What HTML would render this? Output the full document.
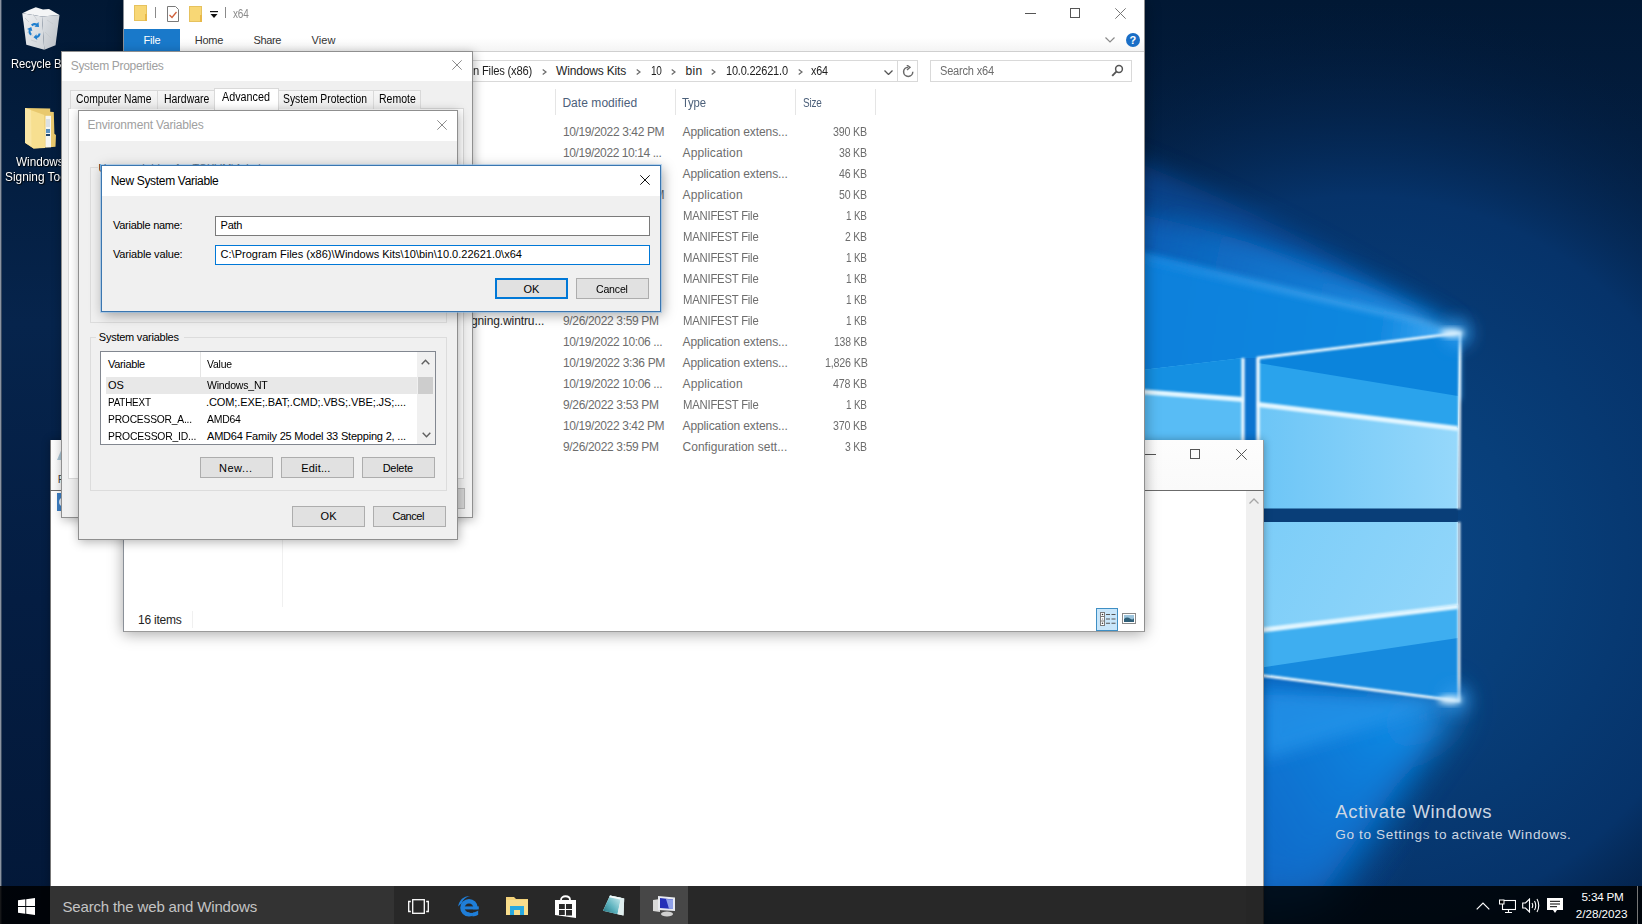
<!DOCTYPE html>
<html><head><meta charset="utf-8">
<style>
*{box-sizing:border-box;margin:0;padding:0}
html,body{width:1642px;height:924px;overflow:hidden;background:#021028}
body{position:relative;font-family:"Liberation Sans",sans-serif;font-size:12px;color:#000}
.a{position:absolute}
.t{position:absolute;white-space:nowrap;line-height:14px}
#wall{position:absolute;left:0;top:0;width:1642px;height:924px}
</style></head><body>

<!-- WALLPAPER -->
<svg id="wall" width="1642" height="924" viewBox="0 0 1642 924">
  <defs>
    <linearGradient id="bgL" x1="0" y1="0" x2="0" y2="924" gradientUnits="userSpaceOnUse">
      <stop offset="0" stop-color="#011834"/>
      <stop offset="0.35" stop-color="#06244c"/>
      <stop offset="0.65" stop-color="#041d42"/>
      <stop offset="1" stop-color="#031838"/>
    </linearGradient>
    <radialGradient id="glow" cx="1360" cy="560" r="560" gradientUnits="userSpaceOnUse">
      <stop offset="0" stop-color="#0a4686"/>
      <stop offset="0.3" stop-color="#083f7a"/>
      <stop offset="0.65" stop-color="#06336a"/>
      <stop offset="1" stop-color="#021a3a" stop-opacity="0"/>
    </radialGradient>
    <radialGradient id="glowB" cx="1200" cy="770" r="230" gradientUnits="userSpaceOnUse">
      <stop offset="0" stop-color="#0c72d2"/>
      <stop offset="0.55" stop-color="#0a62b8" stop-opacity="0.75"/>
      <stop offset="1" stop-color="#0a4f95" stop-opacity="0"/>
    </radialGradient>
    <linearGradient id="beam" x1="1144" y1="290" x2="1460" y2="332" gradientUnits="userSpaceOnUse">
      <stop offset="0" stop-color="#0b80dc"/>
      <stop offset="0.75" stop-color="#1088e0"/>
      <stop offset="1" stop-color="#4cb0f8"/>
    </linearGradient>
    <linearGradient id="soft" x1="1144" y1="200" x2="1460" y2="332" gradientUnits="userSpaceOnUse">
      <stop offset="0" stop-color="#0850a4"/>
      <stop offset="0.7" stop-color="#0a5cb4"/>
      <stop offset="1" stop-color="#0c70cc"/>
    </linearGradient>
    <linearGradient id="soft2" x1="1144" y1="200" x2="1460" y2="332" gradientUnits="userSpaceOnUse">
      <stop offset="0" stop-color="#0a62bc"/>
      <stop offset="1" stop-color="#1280dc"/>
    </linearGradient>
    <linearGradient id="tipg" x1="1150" y1="270" x2="1462" y2="333" gradientUnits="userSpaceOnUse">
      <stop offset="0" stop-color="#1a84dc" stop-opacity="0"/>
      <stop offset="0.5" stop-color="#1a88e0" stop-opacity="0.45"/>
      <stop offset="1" stop-color="#3aa8f4" stop-opacity="0.95"/>
    </linearGradient>
    <linearGradient id="streak" x1="1144" y1="251" x2="1460" y2="332" gradientUnits="userSpaceOnUse">
      <stop offset="0" stop-color="#1a88e0" stop-opacity="0.5"/>
      <stop offset="0.8" stop-color="#70c4ff"/>
      <stop offset="1" stop-color="#e8f8ff"/>
    </linearGradient>
    <linearGradient id="p3" x1="1258" y1="0" x2="1458" y2="0" gradientUnits="userSpaceOnUse">
      <stop offset="0" stop-color="#6cc5f6"/>
      <stop offset="1" stop-color="#96d8fb"/>
    </linearGradient>
    <linearGradient id="p4" x1="1258" y1="522" x2="1458" y2="620" gradientUnits="userSpaceOnUse">
      <stop offset="0" stop-color="#7ccdf8"/>
      <stop offset="1" stop-color="#92d6fa"/>
    </linearGradient>
    <linearGradient id="cone" x1="1458" y1="700" x2="1200" y2="860" gradientUnits="userSpaceOnUse">
      <stop offset="0" stop-color="#3aa8f4"/>
      <stop offset="0.25" stop-color="#0f86e2"/>
      <stop offset="1" stop-color="#0a66c6" stop-opacity="0.6"/>
    </linearGradient>
    <filter id="blur8" x="-50%" y="-50%" width="200%" height="200%"><feGaussianBlur stdDeviation="8"/></filter>
    <filter id="blur20" x="-50%" y="-50%" width="200%" height="200%"><feGaussianBlur stdDeviation="20"/></filter>
    <filter id="blur12" x="-50%" y="-50%" width="200%" height="200%"><feGaussianBlur stdDeviation="12"/></filter>
    <filter id="blur1" x="-50%" y="-50%" width="200%" height="200%"><feGaussianBlur stdDeviation="0.9"/></filter>
    <filter id="blur3" x="-50%" y="-50%" width="200%" height="200%"><feGaussianBlur stdDeviation="3"/></filter>
  </defs>
  <rect width="1642" height="924" fill="url(#bgL)"/>
  <rect width="1642" height="924" fill="url(#glow)"/>
  <rect width="1642" height="924" fill="url(#glowB)"/>
  <!-- soft glow above beam -->
  <path d="M1462 333 C1400 292 1290 225 1144 165 L1080 140 L1080 300 Z" fill="url(#soft)" filter="url(#blur12)" opacity="0.65"/>
  <path d="M1462 333 C1390 292 1280 245 1144 215 L1080 200 L1080 290 Z" fill="url(#soft2)" filter="url(#blur12)" opacity="0.85"/>
  
  <path d="M1462 333 L1150 200 L1150 320 Z" fill="url(#tipg)" filter="url(#blur8)"/>
  <!-- bright wedge -->
  <path d="M1460 332 L1100 242 L1100 400 L1460 400 Z" fill="url(#beam)" filter="url(#blur3)"/>
  <!-- streak -->
  <path d="M1462 331 L1100 241 L1100 254 Z" fill="url(#streak)" filter="url(#blur3)" opacity="0.8"/>
  <!-- lower glow wedge -->
  <path d="M1458 700 L1090 640 L1090 900 L1320 900 Z" fill="#0b6ccc" filter="url(#blur20)" opacity="0.75"/>
  <path d="M1458 700 L1100 690 L1100 890 L1320 890 Z" fill="url(#cone)" filter="url(#blur20)"/>
  <path d="M1458 701 L1263 690 L1263 760 Z" fill="#2a9cf0" filter="url(#blur8)" opacity="0.6"/>
  <!-- right panes -->
  <path d="M1258 358 L1460 333 L1458 509 L1258 509 Z" fill="url(#p3)"/>
  <path d="M1258 358 L1460 333 L1458 428 L1258 404 Z" fill="#2aa3ec"/>
  <path d="M1258 358 L1460 333 L1458 396 L1258 363 Z" fill="#0b84dc"/>
  <path d="M1258 522 L1458 522 L1458 700 L1258 675 Z" fill="url(#p4)"/>
  <path d="M1258 630 L1458 605 L1458 700 L1258 675 Z" fill="#3eaef0"/>
  <path d="M1258 668 L1458 638 L1458 700 L1258 675 Z" fill="#168ade"/>
  <rect x="1243" y="508.5" width="215" height="13.5" fill="#093e78"/>
  <rect x="1243" y="358" width="15" height="320" fill="#0b74d0"/>
  <!-- left panes -->
  <path d="M1100 375 L1243 358 L1243 508 L1100 508 Z" fill="#58bcf5"/>
  <path d="M1100 375 L1243 358 L1243 399 L1100 387 Z" fill="#1590e2"/>
  <path d="M1100 522 L1243 522 L1243 672 L1100 660 Z" fill="#72caf7"/>
  <!-- bright bands -->
  <path d="M1258 402 L1458 426 L1458 431 L1258 407 Z" fill="#e2f6ff" filter="url(#blur1)"/>
  <path d="M1100 386 L1243 397 L1243 402 L1100 391 Z" fill="#e2f6ff" filter="url(#blur1)"/>
  <path d="M1258 628 L1458 604 L1458 609 L1258 633 Z" fill="#e2f6ff" filter="url(#blur1)"/>
  <!-- edge glow -->
  <g stroke="#1a78d0" stroke-width="18" fill="none" filter="url(#blur8)" opacity="0.45">
    <path d="M1459 340 L1459 695"/>
  </g>
  <g stroke="#4aaaf0" stroke-width="7" fill="none" filter="url(#blur3)" opacity="0.55">
    <path d="M1459 333 L1459 508 M1459 522 L1459 701"/>
  </g>
  <!-- edges -->
  <g stroke="#f2fbff" stroke-width="2.6" fill="none" filter="url(#blur1)">
    <path d="M1258 509 L1258 358 L1460 333 L1459 509"/>
    <path d="M1258 522 L1258 675 L1459 701 L1459 522"/>
    <path d="M1243 508 L1243 358" stroke-width="3.2"/>
    <path d="M1243 522 L1243 672" stroke-width="3.2"/>
    <path d="M1258 509 L1258 358" stroke-width="3.2"/>
  </g>
  <circle cx="1458" cy="333" r="14" fill="#3aa0f0" filter="url(#blur8)" opacity="0.7"/>
  <ellipse cx="1452" cy="333" rx="12" ry="4" fill="#e8f8ff" filter="url(#blur3)"/>
  <circle cx="1456" cy="700" r="14" fill="#3aa0f0" filter="url(#blur8)" opacity="0.6"/>
  <ellipse cx="1450" cy="700" rx="12" ry="4" fill="#e8f8ff" filter="url(#blur3)"/>
</svg>

<div class="t" style="left:1335.30px;top:803.09px;font-size:18.5px;line-height:18.5px;color:#cdd7e3;letter-spacing:0.684px">Activate Windows</div>
<div class="t" style="left:1335.30px;top:827.79px;font-size:13.6px;line-height:13.6px;color:#cdd7e3;letter-spacing:0.618px">Go to Settings to activate Windows.</div>
<div class="a" style="left:0;top:0;width:1px;height:924px;background:#8a93a0"></div><div class="a" style="left:1px;top:0;width:1px;height:924px;background:#3a4a60"></div>
<svg class="a" style="left:15px;top:2px" width="52" height="52" viewBox="0 0 52 52">
  <defs><linearGradient id="rbf" x1="0" y1="0" x2="1" y2="1"><stop offset="0" stop-color="#eef0f2"/><stop offset="1" stop-color="#cfd3d8"/></linearGradient>
  <linearGradient id="rbr" x1="0" y1="0" x2="1" y2="1"><stop offset="0" stop-color="#dfe2e6"/><stop offset="1" stop-color="#b9bec4"/></linearGradient></defs>
  <path d="M7.3 11.3 L27 14.5 L29.3 47.8 L11.3 42.8 Z" fill="url(#rbf)"/>
  <path d="M27 14.5 L44.5 12.9 L40.5 43.3 L29.3 47.8 Z" fill="url(#rbr)"/>
  <path d="M7.3 11.3 L14 8 L20.8 5.3 L28 7.5 L34 7 L44.5 12.9 L27 14.5 Z" fill="#f4f5f6"/>
  <path d="M10 16 L14 20 M18 12 L22 18 M32 18 L38 22 M12 30 L18 34 M30 30 L36 36 M16 38 L22 40" stroke="#c4c8cc" stroke-width="1" opacity="0.7"/>
  <g fill="#1f7fcf">
    <path d="M16 22.5 C17.5 21 20 20.5 22 21.5 L23.5 20 L24 25 L19.5 24.8 L20.8 23.5 C19.5 23 18.2 23.4 17.4 24.3 Z"/>
    <path d="M25.5 31.5 C25.5 33.8 24 35.5 22 36 L22.3 38 L18.5 35.2 L21.5 32.3 L21.7 34 C22.8 33.6 23.5 32.6 23.5 31.5 Z"/>
    <path d="M15.8 33.5 C13.8 32.2 13 29.8 13.8 27.7 L12 27 L16.3 25 L17.3 29 L15.7 28.5 C15.3 29.8 15.8 31 16.8 31.8 Z"/>
  </g>
</svg>
<svg class="a" style="left:15px;top:100px" width="52" height="52" viewBox="0 0 52 52">
  <path d="M10 8 L35.2 8.4 L35.2 11.8 L38.8 12 L39.4 33.8 L41 35 L40.5 46.7 L18.6 48.4 L10 42.8 Z" fill="#e9c96e"/>
  <path d="M30.5 15.8 L36 15.8 L36 47.3 L30.5 47.3 Z" fill="#f6f6f2"/>
  <path d="M31 20 H35 M31 22 H35 M31 24 H35 M31 26 H35" stroke="#9ab0c4" stroke-width="0.6"/>
  <rect x="31" y="29" width="4" height="4" fill="#5a90c0"/><rect x="31" y="34" width="4" height="2" fill="#24486c"/>
  <path d="M10 8 L29.3 15 L30 48 L18.6 48.4 L10 42.8 Z" fill="#f7df90"/>
  <path d="M10 8 L16 10 L16.5 46 L10 42.8 Z" fill="#f9e6a6"/>
</svg>
<div class="t" style="left:10.78px;top:57.67px;font-size:12.2px;line-height:12.2px;color:#fff;transform:scaleX(0.9222);transform-origin:0 0;text-shadow:1px 1px 1px rgba(0,0,0,0.9),0 0 2px rgba(0,0,0,0.6)">Recycle Bin</div>
<div class="t" style="left:16.20px;top:156.37px;font-size:12.2px;line-height:12.2px;color:#fff;transform:scaleX(0.9646);transform-origin:0 0;text-shadow:1px 1px 1px rgba(0,0,0,0.9),0 0 2px rgba(0,0,0,0.6)">Windows</div>
<div class="t" style="left:4.80px;top:171.47px;font-size:12.2px;line-height:12.2px;color:#fff;transform:scaleX(0.9724);transform-origin:0 0;text-shadow:1px 1px 1px rgba(0,0,0,0.9),0 0 2px rgba(0,0,0,0.6)">Signing Tools</div>
<div class="a" style="left:50px;top:440px;width:1214px;height:484px;background:#fff;border-left:1px solid #777;border-right:1px solid #9a9a9a;box-shadow:0 0 8px rgba(0,0,0,0.3)"></div>
<div class="a" style="left:51px;top:440px;width:1212px;height:50px;background:linear-gradient(#fdfdfd,#fafafa)"></div>
<div class="a" style="left:50px;top:490px;width:1214px;height:1px;background:#6b6b6b"></div>
<div class="a" style="left:57px;top:493px;width:10px;height:18px;background:#3d7fc4"></div>
<div class="a" style="left:59px;top:497px;width:10px;height:10px;border-radius:50%;border:2px solid #e8f0fa"></div>
<svg class="a" style="left:57px;top:446px" width="8" height="14" viewBox="0 0 8 14"><path d="M6 0 L0 14 L8 14 Z" fill="#a9c4d4"/></svg>
<div class="a" style="left:1145px;top:454px;width:11px;height:1px;background:#555"></div>
<div class="a" style="left:1190px;top:449px;width:10px;height:10px;border:1px solid #555"></div>
<svg class="a" style="left:1236px;top:449px" width="11" height="11" viewBox="0 0 11 11"><path d="M0.3 0.3 L10.7 10.7 M10.7 0.3 L0.3 10.7" stroke="#555" stroke-width="1"/></svg>
<div class="a" style="left:1246px;top:491px;width:17px;height:433px;background:#f0f0f0"></div>
<svg class="a" style="left:1249px;top:498px" width="10" height="6" viewBox="0 0 10 6"><path d="M0.5 5.5 L5 1 L9.5 5.5" fill="none" stroke="#a6a6a6" stroke-width="1.3"/></svg>
<div class="t" style="left:57.80px;top:474.19px;font-size:11px;line-height:11px;color:#444">File</div>
<div class="a" style="left:123px;top:0;width:1022px;height:632px;background:#fff;border-left:1px solid #8a9098;border-right:1px solid #8f8f8f;border-bottom:1px solid #9a9a9a;box-shadow:0 2px 14px rgba(0,0,0,0.35)"></div>
<div class="a" style="left:134px;top:5px;width:13px;height:16px;background:#f8d775;border:1px solid #e6c25e"></div>
<div class="a" style="left:145px;top:14px;width:2px;height:7px;background:#e8b848"></div>
<div class="a" style="left:155px;top:7px;width:1px;height:11px;background:#8a8a8a"></div>
<svg class="a" style="left:167px;top:6px" width="12" height="16" viewBox="0 0 12 16"><path d="M0.5 0.5 H8.5 L11.5 3.5 V15.5 H0.5 Z" fill="#fff" stroke="#7a7a7a"/><path d="M2.5 9 L5 11.5 L9.5 6" fill="none" stroke="#d0603a" stroke-width="1.3"/></svg>
<div class="a" style="left:189px;top:6px;width:13px;height:16px;background:#f8d775;border:1px solid #e6c25e"></div>
<div class="a" style="left:200px;top:15px;width:2px;height:7px;background:#e8b848"></div>
<svg class="a" style="left:210px;top:11px" width="8" height="8" viewBox="0 0 8 8"><rect x="0" y="0" width="8" height="1.2" fill="#111"/><path d="M0.5 3 H7.5 L4 7 Z" fill="#111"/></svg>
<div class="a" style="left:225px;top:7px;width:1px;height:11px;background:#8a8a8a"></div>
<div class="a" style="left:1025px;top:13px;width:11px;height:1px;background:#555"></div>
<div class="a" style="left:1070px;top:8px;width:10px;height:10px;border:1px solid #555"></div>
<svg class="a" style="left:1115px;top:8px" width="11" height="11" viewBox="0 0 11 11"><path d="M0.3 0.3 L10.7 10.7 M10.7 0.3 L0.3 10.7" stroke="#777" stroke-width="1"/></svg>
<div class="a" style="left:124px;top:29px;width:1020px;height:22px;background:linear-gradient(#fff 40%,#f4f4f4)"></div>
<div class="a" style="left:124px;top:29px;width:56px;height:22px;background:#1979ca"></div>
<div class="a" style="left:124px;top:51px;width:1020px;height:1px;background:#cfcfcf"></div>
<svg class="a" style="left:1105px;top:37px" width="10" height="6" viewBox="0 0 10 6"><path d="M0.5 0.5 L5 5 L9.5 0.5" fill="none" stroke="#8a8a8a" stroke-width="1.2"/></svg>
<div class="a" style="left:1126px;top:33px;width:14px;height:14px;border-radius:50%;background:#1a6ec6"></div>
<div class="a" style="left:472px;top:60px;width:446px;height:22px;border:1px solid #d9d9d9;border-left:none"></div>
<div class="a" style="left:897px;top:60px;width:1px;height:22px;background:#d9d9d9"></div>
<svg class="a" style="left:884px;top:70px" width="9" height="5" viewBox="0 0 9 5"><path d="M0.5 0.5 L4.5 4.5 L8.5 0.5" fill="none" stroke="#555" stroke-width="1.3"/></svg>
<svg class="a" style="left:902px;top:65px" width="13" height="13" viewBox="0 0 13 13"><path d="M10.8 6.8 A4.6 4.6 0 1 1 6.2 2.2" fill="none" stroke="#6a6a6a" stroke-width="1.5"/><path d="M4.8 0 L8 2.3 L5 5" fill="none" stroke="#6a6a6a" stroke-width="1.4"/></svg>
<div class="a" style="left:930px;top:60px;width:202px;height:22px;border:1px solid #d9d9d9"></div>
<svg class="a" style="left:1111px;top:64px" width="13" height="13" viewBox="0 0 13 13"><circle cx="8" cy="5" r="3.4" fill="none" stroke="#555" stroke-width="1.5"/><path d="M5.6 7.4 L1.2 11.8" stroke="#555" stroke-width="1.9"/></svg>
<div class="a" style="left:555px;top:89px;width:1px;height:26px;background:#e5e5e5"></div>
<div class="a" style="left:675px;top:89px;width:1px;height:26px;background:#e5e5e5"></div>
<div class="a" style="left:795px;top:89px;width:1px;height:26px;background:#e5e5e5"></div>
<div class="a" style="left:875px;top:89px;width:1px;height:26px;background:#e5e5e5"></div>
<div class="a" style="left:282px;top:86px;width:1px;height:521px;background:#f0f0f0"></div>
<div class="a" style="left:192px;top:611px;width:1px;height:17px;background:#f0f0f0"></div>
<div class="a" style="left:1096px;top:608px;width:22px;height:23px;background:#c9e6fa;border:1px solid #3f8fc4"></div>
<svg class="a" style="left:1100px;top:612px" width="17" height="15" viewBox="0 0 17 15"><rect x="0.5" y="0.5" width="4" height="13" fill="#fff" stroke="#7a7a7a"/><path d="M0.5 4.5 H4.5 M0.5 9 H4.5" stroke="#7a7a7a"/><circle cx="2.5" cy="2.5" r="0.8" fill="#333"/><circle cx="2.5" cy="7" r="0.8" fill="#999"/><circle cx="2.5" cy="11.3" r="0.8" fill="#333"/><path d="M6 2.5 H10 M11.5 2.5 H15.5 M6 7 H10 M11.5 7 H15.5 M6 11.3 H10 M11.5 11.3 H15.5" stroke="#555" stroke-width="1.1"/></svg>
<svg class="a" style="left:1122px;top:613px" width="14" height="11" viewBox="0 0 14 11"><rect x="0.5" y="0.5" width="13" height="10" fill="#fff" stroke="#8a8a8a"/><rect x="2" y="2" width="10" height="7" fill="#9cc4dc"/><path d="M2 6 Q5 3.5 8 5.5 T12 5 V9 H2 Z" fill="#2f5f78"/></svg>
<div class="t" style="left:233.00px;top:7.84px;font-size:12px;line-height:12px;color:#8a8a8a;letter-spacing:-0.240px;transform:scaleX(0.8336);transform-origin:0 0">x64</div>
<div class="t" style="left:143.60px;top:35.49px;font-size:11px;line-height:11px;color:#fff;letter-spacing:-0.202px">File</div>
<div class="t" style="left:194.75px;top:35.49px;font-size:11px;line-height:11px;color:#333;letter-spacing:-0.242px">Home</div>
<div class="t" style="left:253.60px;top:35.49px;font-size:11px;line-height:11px;color:#333;letter-spacing:-0.384px">Share</div>
<div class="t" style="left:311.40px;top:35.49px;font-size:11px;line-height:11px;color:#333;letter-spacing:0.167px">View</div>
<div class="t" style="left:1129.50px;top:35.19px;font-size:11px;line-height:11px;color:#fff;font-weight:bold">?</div>
<div class="t" style="left:473.00px;top:64.64px;font-size:12px;line-height:12px;color:#1e1e1e;letter-spacing:-0.214px;transform:scaleX(0.9345);transform-origin:0 0">n Files (x86)</div>
<div class="t" style="left:556.00px;top:64.64px;font-size:12px;line-height:12px;color:#1e1e1e;letter-spacing:-0.165px">Windows Kits</div>
<div class="t" style="left:650.70px;top:64.64px;font-size:12px;line-height:12px;color:#1e1e1e;letter-spacing:-0.240px;transform:scaleX(0.8337);transform-origin:0 0">10</div>
<div class="t" style="left:685.60px;top:64.64px;font-size:12px;line-height:12px;color:#1e1e1e;letter-spacing:0.330px">bin</div>
<div class="t" style="left:725.60px;top:64.64px;font-size:12px;line-height:12px;color:#1e1e1e;letter-spacing:-0.218px;transform:scaleX(0.9163);transform-origin:0 0">10.0.22621.0</div>
<div class="t" style="left:810.80px;top:64.64px;font-size:12px;line-height:12px;color:#1e1e1e;letter-spacing:-0.224px;transform:scaleX(0.8946);transform-origin:0 0">x64</div>
<svg class="a" style="left:542px;top:68.5px" width="5" height="6" viewBox="0 0 5 6"><path d="M0.7 0.5 L4 3 L0.7 5.5" fill="none" stroke="#6a6a6a" stroke-width="1.2"/></svg>
<svg class="a" style="left:636px;top:68.5px" width="5" height="6" viewBox="0 0 5 6"><path d="M0.7 0.5 L4 3 L0.7 5.5" fill="none" stroke="#6a6a6a" stroke-width="1.2"/></svg>
<svg class="a" style="left:671px;top:68.5px" width="5" height="6" viewBox="0 0 5 6"><path d="M0.7 0.5 L4 3 L0.7 5.5" fill="none" stroke="#6a6a6a" stroke-width="1.2"/></svg>
<svg class="a" style="left:711.4px;top:68.5px" width="5" height="6" viewBox="0 0 5 6"><path d="M0.7 0.5 L4 3 L0.7 5.5" fill="none" stroke="#6a6a6a" stroke-width="1.2"/></svg>
<svg class="a" style="left:797.7px;top:68.5px" width="5" height="6" viewBox="0 0 5 6"><path d="M0.7 0.5 L4 3 L0.7 5.5" fill="none" stroke="#6a6a6a" stroke-width="1.2"/></svg>
<div class="t" style="left:939.50px;top:64.54px;font-size:12px;line-height:12px;color:#6d6d6d;letter-spacing:-0.217px;transform:scaleX(0.9209);transform-origin:0 0">Search x64</div>
<div class="t" style="left:562.40px;top:96.94px;font-size:12px;line-height:12px;color:#4c607a;letter-spacing:0.053px">Date modified</div>
<div class="t" style="left:682.40px;top:96.94px;font-size:12px;line-height:12px;color:#4c607a;letter-spacing:-0.212px;transform:scaleX(0.9453);transform-origin:0 0">Type</div>
<div class="t" style="left:802.50px;top:96.94px;font-size:12px;line-height:12px;color:#4c607a;letter-spacing:-0.240px;transform:scaleX(0.8323);transform-origin:0 0">Size</div>
<div class="t" style="left:563.00px;top:125.84px;font-size:12px;line-height:12px;color:#6d6d6d;letter-spacing:-0.387px">10/19/2022 3:42 PM</div>
<div class="t" style="left:682.50px;top:125.84px;font-size:12px;line-height:12px;color:#6d6d6d;letter-spacing:-0.103px">Application extens...</div>
<div class="t" style="left:833.30px;top:125.84px;font-size:12px;line-height:12px;color:#6d6d6d;letter-spacing:-0.225px;transform:scaleX(0.8892);transform-origin:0 0">390 KB</div>
<div class="t" style="left:563.00px;top:146.84px;font-size:12px;line-height:12px;color:#6d6d6d;letter-spacing:-0.417px">10/19/2022 10:14 ...</div>
<div class="t" style="left:682.50px;top:146.84px;font-size:12px;line-height:12px;color:#6d6d6d;letter-spacing:0.137px">Application</div>
<div class="t" style="left:839.30px;top:146.84px;font-size:12px;line-height:12px;color:#6d6d6d;letter-spacing:-0.227px;transform:scaleX(0.8811);transform-origin:0 0">38 KB</div>
<div class="t" style="left:563.00px;top:167.84px;font-size:12px;line-height:12px;color:#6d6d6d;letter-spacing:-0.417px">10/19/2022 10:14 ...</div>
<div class="t" style="left:682.50px;top:167.84px;font-size:12px;line-height:12px;color:#6d6d6d;letter-spacing:-0.103px">Application extens...</div>
<div class="t" style="left:839.30px;top:167.84px;font-size:12px;line-height:12px;color:#6d6d6d;letter-spacing:-0.227px;transform:scaleX(0.8811);transform-origin:0 0">46 KB</div>
<div class="t" style="left:563.00px;top:188.84px;font-size:12px;line-height:12px;color:#6d6d6d;letter-spacing:-0.387px">10/19/2022 3:42 PM</div>
<div class="t" style="left:682.50px;top:188.84px;font-size:12px;line-height:12px;color:#6d6d6d;letter-spacing:0.137px">Application</div>
<div class="t" style="left:839.30px;top:188.84px;font-size:12px;line-height:12px;color:#6d6d6d;letter-spacing:-0.227px;transform:scaleX(0.8811);transform-origin:0 0">50 KB</div>
<div class="t" style="left:563.00px;top:209.84px;font-size:12px;line-height:12px;color:#6d6d6d;letter-spacing:-0.338px">9/26/2022 3:59 PM</div>
<div class="t" style="left:682.50px;top:209.84px;font-size:12px;line-height:12px;color:#6d6d6d;letter-spacing:-0.213px;transform:scaleX(0.9395);transform-origin:0 0">MANIFEST File</div>
<div class="t" style="left:846.30px;top:209.84px;font-size:12px;line-height:12px;color:#6d6d6d;letter-spacing:-0.241px;transform:scaleX(0.8304);transform-origin:0 0">1 KB</div>
<div class="t" style="left:563.00px;top:230.84px;font-size:12px;line-height:12px;color:#6d6d6d;letter-spacing:-0.338px">9/26/2022 3:59 PM</div>
<div class="t" style="left:682.50px;top:230.84px;font-size:12px;line-height:12px;color:#6d6d6d;letter-spacing:-0.213px;transform:scaleX(0.9395);transform-origin:0 0">MANIFEST File</div>
<div class="t" style="left:845.30px;top:230.84px;font-size:12px;line-height:12px;color:#6d6d6d;letter-spacing:-0.230px;transform:scaleX(0.8688);transform-origin:0 0">2 KB</div>
<div class="t" style="left:563.00px;top:251.84px;font-size:12px;line-height:12px;color:#6d6d6d;letter-spacing:-0.338px">9/26/2022 3:59 PM</div>
<div class="t" style="left:682.50px;top:251.84px;font-size:12px;line-height:12px;color:#6d6d6d;letter-spacing:-0.213px;transform:scaleX(0.9395);transform-origin:0 0">MANIFEST File</div>
<div class="t" style="left:846.30px;top:251.84px;font-size:12px;line-height:12px;color:#6d6d6d;letter-spacing:-0.241px;transform:scaleX(0.8304);transform-origin:0 0">1 KB</div>
<div class="t" style="left:563.00px;top:272.84px;font-size:12px;line-height:12px;color:#6d6d6d;letter-spacing:-0.338px">9/26/2022 3:59 PM</div>
<div class="t" style="left:682.50px;top:272.84px;font-size:12px;line-height:12px;color:#6d6d6d;letter-spacing:-0.213px;transform:scaleX(0.9395);transform-origin:0 0">MANIFEST File</div>
<div class="t" style="left:846.30px;top:272.84px;font-size:12px;line-height:12px;color:#6d6d6d;letter-spacing:-0.241px;transform:scaleX(0.8304);transform-origin:0 0">1 KB</div>
<div class="t" style="left:563.00px;top:293.84px;font-size:12px;line-height:12px;color:#6d6d6d;letter-spacing:-0.338px">9/26/2022 3:59 PM</div>
<div class="t" style="left:682.50px;top:293.84px;font-size:12px;line-height:12px;color:#6d6d6d;letter-spacing:-0.213px;transform:scaleX(0.9395);transform-origin:0 0">MANIFEST File</div>
<div class="t" style="left:846.30px;top:293.84px;font-size:12px;line-height:12px;color:#6d6d6d;letter-spacing:-0.241px;transform:scaleX(0.8304);transform-origin:0 0">1 KB</div>
<div class="t" style="left:563.00px;top:314.84px;font-size:12px;line-height:12px;color:#6d6d6d;letter-spacing:-0.338px">9/26/2022 3:59 PM</div>
<div class="t" style="left:682.50px;top:314.84px;font-size:12px;line-height:12px;color:#6d6d6d;letter-spacing:-0.213px;transform:scaleX(0.9395);transform-origin:0 0">MANIFEST File</div>
<div class="t" style="left:846.30px;top:314.84px;font-size:12px;line-height:12px;color:#6d6d6d;letter-spacing:-0.241px;transform:scaleX(0.8304);transform-origin:0 0">1 KB</div>
<div class="t" style="left:563.00px;top:335.84px;font-size:12px;line-height:12px;color:#6d6d6d;letter-spacing:-0.380px">10/19/2022 10:06 ...</div>
<div class="t" style="left:682.50px;top:335.84px;font-size:12px;line-height:12px;color:#6d6d6d;letter-spacing:-0.103px">Application extens...</div>
<div class="t" style="left:834.00px;top:335.84px;font-size:12px;line-height:12px;color:#6d6d6d;letter-spacing:-0.230px;transform:scaleX(0.8715);transform-origin:0 0">138 KB</div>
<div class="t" style="left:563.00px;top:356.84px;font-size:12px;line-height:12px;color:#6d6d6d;letter-spacing:-0.340px">10/19/2022 3:36 PM</div>
<div class="t" style="left:682.50px;top:356.84px;font-size:12px;line-height:12px;color:#6d6d6d;letter-spacing:-0.103px">Application extens...</div>
<div class="t" style="left:824.50px;top:356.84px;font-size:12px;line-height:12px;color:#6d6d6d;letter-spacing:-0.223px;transform:scaleX(0.8953);transform-origin:0 0">1,826 KB</div>
<div class="t" style="left:563.00px;top:377.84px;font-size:12px;line-height:12px;color:#6d6d6d;letter-spacing:-0.380px">10/19/2022 10:06 ...</div>
<div class="t" style="left:682.50px;top:377.84px;font-size:12px;line-height:12px;color:#6d6d6d;letter-spacing:0.137px">Application</div>
<div class="t" style="left:833.30px;top:377.84px;font-size:12px;line-height:12px;color:#6d6d6d;letter-spacing:-0.225px;transform:scaleX(0.8892);transform-origin:0 0">478 KB</div>
<div class="t" style="left:563.00px;top:398.84px;font-size:12px;line-height:12px;color:#6d6d6d;letter-spacing:-0.338px">9/26/2022 3:53 PM</div>
<div class="t" style="left:682.50px;top:398.84px;font-size:12px;line-height:12px;color:#6d6d6d;letter-spacing:-0.213px;transform:scaleX(0.9395);transform-origin:0 0">MANIFEST File</div>
<div class="t" style="left:846.30px;top:398.84px;font-size:12px;line-height:12px;color:#6d6d6d;letter-spacing:-0.241px;transform:scaleX(0.8304);transform-origin:0 0">1 KB</div>
<div class="t" style="left:563.00px;top:419.84px;font-size:12px;line-height:12px;color:#6d6d6d;letter-spacing:-0.387px">10/19/2022 3:42 PM</div>
<div class="t" style="left:682.50px;top:419.84px;font-size:12px;line-height:12px;color:#6d6d6d;letter-spacing:-0.103px">Application extens...</div>
<div class="t" style="left:833.30px;top:419.84px;font-size:12px;line-height:12px;color:#6d6d6d;letter-spacing:-0.225px;transform:scaleX(0.8892);transform-origin:0 0">370 KB</div>
<div class="t" style="left:563.00px;top:440.84px;font-size:12px;line-height:12px;color:#6d6d6d;letter-spacing:-0.338px">9/26/2022 3:59 PM</div>
<div class="t" style="left:682.50px;top:440.84px;font-size:12px;line-height:12px;color:#6d6d6d;letter-spacing:0.034px">Configuration sett...</div>
<div class="t" style="left:845.30px;top:440.84px;font-size:12px;line-height:12px;color:#6d6d6d;letter-spacing:-0.230px;transform:scaleX(0.8688);transform-origin:0 0">3 KB</div>
<div class="t" style="left:328.82px;top:314.84px;font-size:12px;line-height:12px;color:#1e1e1e;letter-spacing:-0.100px">Microsoft.Windows.Build.Signing.wintru...</div>
<div class="t" style="left:138.00px;top:613.54px;font-size:12px;line-height:12px;color:#1e1e1e;letter-spacing:-0.236px">16 items</div>
<div class="a" style="left:61px;top:51px;width:412px;height:467px;background:#f0f0f0;border:1px solid #8f8f8f;box-shadow:1px 2px 10px rgba(0,0,0,0.3)"></div>
<div class="a" style="left:62px;top:52px;width:410px;height:29px;background:#fff"></div>
<div class="t" style="left:70.70px;top:59.84px;font-size:12px;line-height:12px;color:#a0a0a0;letter-spacing:-0.308px">System Properties</div>
<svg class="a" style="left:452px;top:60px" width="10" height="10" viewBox="0 0 10 10"><path d="M0.3 0.3 L9.7 9.7 M9.7 0.3 L0.3 9.7" stroke="#8c8c8c" stroke-width="1"/></svg>
<div class="a" style="left:68px;top:108px;width:396px;height:371px;background:#fff;border:1px solid #d9d9d9"></div>
<div class="a" style="left:70px;top:90px;width:88px;height:19px;background:linear-gradient(#f6f6f6,#ececec);border:1px solid #d9d9d9;border-bottom:none"></div>
<div class="a" style="left:157px;top:90px;width:58px;height:19px;background:linear-gradient(#f6f6f6,#ececec);border:1px solid #d9d9d9;border-bottom:none"></div>
<div class="a" style="left:278px;top:90px;width:96px;height:19px;background:linear-gradient(#f6f6f6,#ececec);border:1px solid #d9d9d9;border-bottom:none"></div>
<div class="a" style="left:373px;top:90px;width:48px;height:19px;background:linear-gradient(#f6f6f6,#ececec);border:1px solid #d9d9d9;border-bottom:none"></div>
<div class="a" style="left:214px;top:88px;width:65px;height:22px;background:#fff;border:1px solid #d9d9d9;border-bottom:none"></div>
<div class="t" style="left:75.60px;top:93.42px;font-size:12.5px;line-height:12.5px;color:#000;transform:scaleX(0.8218);transform-origin:0 0">Computer Name</div>
<div class="t" style="left:163.66px;top:93.02px;font-size:12.5px;line-height:12.5px;color:#000;transform:scaleX(0.8359);transform-origin:0 0">Hardware</div>
<div class="t" style="left:222.30px;top:91.32px;font-size:12.5px;line-height:12.5px;color:#000;transform:scaleX(0.8626);transform-origin:0 0">Advanced</div>
<div class="t" style="left:283.00px;top:93.42px;font-size:12.5px;line-height:12.5px;color:#000;transform:scaleX(0.8278);transform-origin:0 0">System Protection</div>
<div class="t" style="left:379.16px;top:93.42px;font-size:12.5px;line-height:12.5px;color:#000;transform:scaleX(0.8408);transform-origin:0 0">Remote</div>
<div class="a" style="left:440px;top:488px;width:25px;height:21px;background:#d4d4d4;border:1px solid #b5b5b5"></div>
<div class="a" style="left:78px;top:110px;width:380px;height:430px;background:#f0f0f0;border:1px solid #8f8f8f;box-shadow:1px 2px 10px rgba(0,0,0,0.3)"></div>
<div class="a" style="left:79px;top:111px;width:378px;height:30px;background:#fff"></div>
<div class="t" style="left:87.40px;top:119.44px;font-size:12px;line-height:12px;color:#a0a0a0;letter-spacing:-0.177px">Environment Variables</div>
<svg class="a" style="left:437px;top:120px" width="10" height="10" viewBox="0 0 10 10"><path d="M0.3 0.3 L9.7 9.7 M9.7 0.3 L0.3 9.7" stroke="#8c8c8c" stroke-width="1"/></svg>
<div class="a" style="left:90px;top:167px;width:357px;height:156px;border:1px solid #dcdcdc"></div>
<div class="t" style="left:97.60px;top:162.99px;font-size:11px;line-height:11px;color:#000;letter-spacing:0.250px;background:#f0f0f0;padding:0 1px">User variables for TSXVM\Admin</div>
<div class="a" style="left:90px;top:337px;width:357px;height:154px;border:1px solid #dcdcdc"></div>
<div class="a" style="left:96px;top:330px;width:88px;height:12px;background:#f0f0f0"></div>
<div class="t" style="left:98.80px;top:331.89px;font-size:11px;line-height:11px;color:#000;letter-spacing:-0.237px">System variables</div>
<div class="a" style="left:100px;top:351px;width:336px;height:94px;background:#fff;border:1px solid #828790"></div>
<div class="a" style="left:200px;top:352px;width:1px;height:25px;background:#e5e5e5"></div>
<div class="t" style="left:108.10px;top:359.49px;font-size:11px;line-height:11px;color:#000;letter-spacing:-0.346px">Variable</div>
<div class="t" style="left:207.10px;top:359.49px;font-size:11px;line-height:11px;color:#000;letter-spacing:-0.211px;transform:scaleX(0.9485);transform-origin:0 0">Value</div>
<div class="a" style="left:106px;top:377px;width:311px;height:17px;background:#e8e8e8"></div>
<div class="t" style="left:108.00px;top:379.89px;font-size:11px;line-height:11px;color:#000">OS</div>
<div class="t" style="left:207.10px;top:379.89px;font-size:11px;line-height:11px;color:#000;letter-spacing:-0.209px;transform:scaleX(0.9561);transform-origin:0 0">Windows_NT</div>
<div class="t" style="left:108.00px;top:397.09px;font-size:11px;line-height:11px;color:#000;letter-spacing:-0.222px;transform:scaleX(0.8992);transform-origin:0 0">PATHEXT</div>
<div class="t" style="left:206.00px;top:397.09px;font-size:11px;line-height:11px;color:#000;letter-spacing:-0.105px">.COM;.EXE;.BAT;.CMD;.VBS;.VBE;.JS;....</div>
<div class="t" style="left:108.00px;top:414.29px;font-size:11px;line-height:11px;color:#000;letter-spacing:-0.214px;transform:scaleX(0.9326);transform-origin:0 0">PROCESSOR_A...</div>
<div class="t" style="left:207.00px;top:414.29px;font-size:11px;line-height:11px;color:#000;letter-spacing:-0.211px;transform:scaleX(0.9464);transform-origin:0 0">AMD64</div>
<div class="t" style="left:108.00px;top:431.39px;font-size:11px;line-height:11px;color:#000;letter-spacing:-0.212px;transform:scaleX(0.9438);transform-origin:0 0">PROCESSOR_ID...</div>
<div class="t" style="left:207.00px;top:431.39px;font-size:11px;line-height:11px;color:#000;letter-spacing:-0.195px">AMD64 Family 25 Model 33 Stepping 2, ...</div>
<div class="a" style="left:417px;top:352px;width:18px;height:92px;background:#f0f0f0"></div>
<div class="a" style="left:418px;top:377px;width:15px;height:17px;background:#cdcdcd"></div>
<svg class="a" style="left:421px;top:359px" width="9" height="6" viewBox="0 0 9 6"><path d="M0.7 5.3 L4.5 1.2 L8.3 5.3" fill="none" stroke="#606060" stroke-width="1.4"/></svg>
<svg class="a" style="left:422px;top:432px" width="9" height="6" viewBox="0 0 9 6"><path d="M0.7 0.7 L4.5 4.8 L8.3 0.7" fill="none" stroke="#606060" stroke-width="1.4"/></svg>
<div class="a" style="left:200px;top:457px;width:73px;height:21px;background:#e1e1e1;border:1px solid #adadad;"></div>
<div class="t" style="left:219.00px;top:462.59px;font-size:11px;line-height:11px;color:#000;letter-spacing:0.498px">New...</div>
<div class="a" style="left:281px;top:457px;width:73px;height:21px;background:#e1e1e1;border:1px solid #adadad;"></div>
<div class="t" style="left:301.30px;top:462.59px;font-size:11px;line-height:11px;color:#000;letter-spacing:0.156px">Edit...</div>
<div class="a" style="left:362px;top:457px;width:73px;height:21px;background:#e1e1e1;border:1px solid #adadad;"></div>
<div class="t" style="left:382.70px;top:462.59px;font-size:11px;line-height:11px;color:#000;letter-spacing:-0.296px">Delete</div>
<div class="a" style="left:292px;top:506px;width:73px;height:21px;background:#e1e1e1;border:1px solid #adadad;"></div>
<div class="t" style="left:320.60px;top:511.39px;font-size:11px;line-height:11px;color:#000">OK</div>
<div class="a" style="left:373px;top:506px;width:73px;height:21px;background:#e1e1e1;border:1px solid #adadad;"></div>
<div class="t" style="left:392.40px;top:511.39px;font-size:11px;line-height:11px;color:#000;letter-spacing:-0.439px">Cancel</div>
<div class="a" style="left:101px;top:165px;width:560px;height:147px;background:#f0f0f0;border:1px solid #3a76b0;box-shadow:0 0 0 1px rgba(140,190,235,0.55),2px 3px 12px rgba(0,0,0,0.35)"></div>
<div class="a" style="left:102px;top:166px;width:558px;height:30px;background:#fff"></div>
<div class="t" style="left:110.70px;top:174.74px;font-size:12px;line-height:12px;color:#000;letter-spacing:-0.319px">New System Variable</div>
<svg class="a" style="left:640px;top:175px" width="10" height="10" viewBox="0 0 10 10"><path d="M0.3 0.3 L9.7 9.7 M9.7 0.3 L0.3 9.7" stroke="#111" stroke-width="1"/></svg>
<div class="t" style="left:113.00px;top:220.49px;font-size:11px;line-height:11px;color:#000;letter-spacing:-0.270px">Variable name:</div>
<div class="t" style="left:113.00px;top:249.29px;font-size:11px;line-height:11px;color:#000;letter-spacing:-0.164px">Variable value:</div>
<div class="a" style="left:215px;top:216px;width:435px;height:20px;background:#fff;border:1px solid #7a7a7a"></div>
<div class="t" style="left:220.60px;top:220.49px;font-size:11px;line-height:11px;color:#000;letter-spacing:-0.304px">Path</div>
<div class="a" style="left:215px;top:245px;width:435px;height:20px;background:#fff;border:1px solid #0078d7"></div>
<div class="t" style="left:220.60px;top:249.29px;font-size:11px;line-height:11px;color:#000;letter-spacing:0.009px">C:\Program Files (x86)\Windows Kits\10\bin\10.0.22621.0\x64</div>
<div class="a" style="left:495px;top:278px;width:73px;height:21px;background:#e1e1e1;border:1px solid #adadad;border:2px solid #0078d7;"></div>
<div class="t" style="left:523.40px;top:283.59px;font-size:11px;line-height:11px;color:#000">OK</div>
<div class="a" style="left:576px;top:278px;width:73px;height:21px;background:#e1e1e1;border:1px solid #adadad;"></div>
<div class="t" style="left:595.50px;top:283.59px;font-size:11px;line-height:11px;color:#000;letter-spacing:-0.208px;transform:scaleX(0.9616);transform-origin:0 0">Cancel</div>
<!-- TASKBAR -->
<div class="a" id="tb" style="left:0;top:886px;width:1642px;height:38px;background:rgba(0,0,0,0.845)"></div>
<div class="a" style="left:50px;top:886px;width:344px;height:38px;background:#333"></div>
<svg class="a" style="left:18px;top:898px" width="17" height="17" viewBox="0 0 17 17"><path d="M0 2.3 L7.3 1.3 V8 H0 Z M8.2 1.2 L17 0 V8 H8.2 Z M0 9 H7.3 V15.7 L0 14.7 Z M8.2 9 H17 V17 L8.2 15.8 Z" fill="#fff"/></svg>

<svg class="a" style="left:408px;top:899px" width="21" height="15" viewBox="0 0 21 15"><rect x="4.7" y="0.7" width="11.6" height="13.6" fill="none" stroke="#fff" stroke-width="1.3"/><path d="M2.8 2.5 H0.7 V12.5 H2.8 M18.2 2.5 H20.3 V12.5 H18.2" fill="none" stroke="#fff" stroke-width="1.3"/></svg>
<svg class="a" style="left:457px;top:895px" width="22" height="22" viewBox="0 0 22 22"><circle cx="12" cy="12.8" r="6.6" fill="none" stroke="#1f7ed8" stroke-width="4.4"/><rect x="12.5" y="14.3" width="10" height="3.6" fill="#262626"/><rect x="7" y="11.4" width="14.8" height="3" fill="#1f7ed8"/><path d="M1.2 11.5 C2 5 7 0.8 13 1 C8.5 2.2 5.5 5.5 4.8 8.2 C3.5 9 2.2 10.2 1.2 11.5 Z" fill="#1f7ed8"/><path d="M16 17.6 C18 17.4 19.5 16.6 21.2 15.6 V19.8 C19.5 20.8 17.5 21.3 15.5 21.5 Z" fill="#1f7ed8"/></svg>
<svg class="a" style="left:506px;top:896px" width="22" height="19" viewBox="0 0 22 19"><path d="M0 1 H8 L10 3 H22 V19 H0 Z" fill="#f3d27a"/><path d="M0 4 H22 V19 H0 Z" fill="#f8dd8c"/><path d="M4 10 H18 V19 H14 V14 H8 V19 H4 Z" fill="#28a9e0"/></svg>
<svg class="a" style="left:555px;top:894px" width="21" height="24" viewBox="0 0 21 24"><path d="M6 6 C6 1 15 1 15 6" fill="none" stroke="#fff" stroke-width="1.8"/><path d="M0 6 H21 V24 L0 21 Z" fill="#fff"/><path d="M4 10 H9.8 V15 H4 Z M11 10 H17 V15 H11 Z M4 16 H9.8 V21 H4 Z M11 16 H17 V21.5 H11 Z" fill="#2a2a2a"/></svg>
<svg class="a" style="left:600px;top:893px" width="27" height="25" viewBox="0 0 27 25"><defs><linearGradient id="np" x1="0" y1="1" x2="1" y2="0"><stop offset="0" stop-color="#1f6f7c"/><stop offset="0.45" stop-color="#5fb4c0"/><stop offset="1" stop-color="#d8f2f4"/></linearGradient></defs><path d="M10 2.4 L24.2 5.4 L23.5 22.5 L3 17.8 Z" fill="#eef6f6"/><path d="M10 2.4 L21 4.8 L17.5 21.2 L3 17.8 Z" fill="url(#np)"/><path d="M10 2.4 L21 4.8 L20.3 6.6 L9.3 4.2 Z" fill="#f4fafa"/><path d="M17.5 21.2 L21 4.8 L24.2 5.4 L23.5 22.5 Z" fill="#dfeeee"/></svg>
<div class="a" style="left:640px;top:886px;width:48px;height:38px;background:#474747"></div>
<svg class="a" style="left:652px;top:895px" width="25" height="22" viewBox="0 0 25 22"><path d="M1 5 L8 4 V17 L1 16 Z" fill="#d8d8d8"/><path d="M6 1 L23 2.5 V16 L6 15 Z" fill="#e8eaf0"/><path d="M8 3 L21 4.5 V14 L8 13 Z" fill="#2430b8"/><path d="M14 4 L21 4.5 V14 L17 13.7 Z" fill="#8fa0e8"/><ellipse cx="15" cy="19" rx="6" ry="2.5" fill="#d0d0d0"/></svg>
<!-- tray -->
<svg class="a" style="left:1476px;top:902px" width="14" height="8" viewBox="0 0 14 8"><path d="M0.7 7.3 L7 1 L13.3 7.3" fill="none" stroke="#fff" stroke-width="1.2"/></svg>
<svg class="a" style="left:1499px;top:899px" width="17" height="15" viewBox="0 0 17 15"><rect x="3.5" y="1.5" width="13" height="9" fill="none" stroke="#fff" stroke-width="1.1"/><path d="M9.5 10.5 V13 M6 13.5 H13" stroke="#fff" stroke-width="1.1"/><rect x="0.5" y="1" width="4.5" height="4" fill="#000" stroke="#fff" stroke-width="1"/></svg>
<svg class="a" style="left:1522px;top:898px" width="18" height="15" viewBox="0 0 18 15"><path d="M0.7 5 H3.5 L7.5 1 V14 L3.5 10 H0.7 Z" fill="none" stroke="#fff" stroke-width="1.1"/><path d="M10 5 Q11.5 7.5 10 10 M12.5 3 Q15 7.5 12.5 12 M15 1 Q18.5 7.5 15 14" fill="none" stroke="#fff" stroke-width="1.1"/></svg>
<svg class="a" style="left:1547px;top:898px" width="16" height="17" viewBox="0 0 16 17"><path d="M0 0 H16 V12 H10 L8 15 L6 12 H0 Z" fill="#fff"/><path d="M3 3.3 H13 M3 6 H13 M3 8.7 H10" stroke="#000" stroke-width="1"/></svg>


<div class="a" style="left:1637px;top:886px;width:1px;height:38px;background:#777"></div>


<div class="t" style="left:62.40px;top:899.30px;font-size:15px;line-height:15px;color:#c4c4c4;letter-spacing:-0.146px">Search the web and Windows</div>
<div class="t" style="left:1581.60px;top:890.80px;font-size:11.7px;line-height:11.7px;color:#fff;letter-spacing:-0.232px">5:34 PM</div>
<div class="t" style="left:1575.80px;top:908.10px;font-size:11.7px;line-height:11.7px;color:#fff;letter-spacing:-0.037px">2/28/2023</div>
</body></html>
